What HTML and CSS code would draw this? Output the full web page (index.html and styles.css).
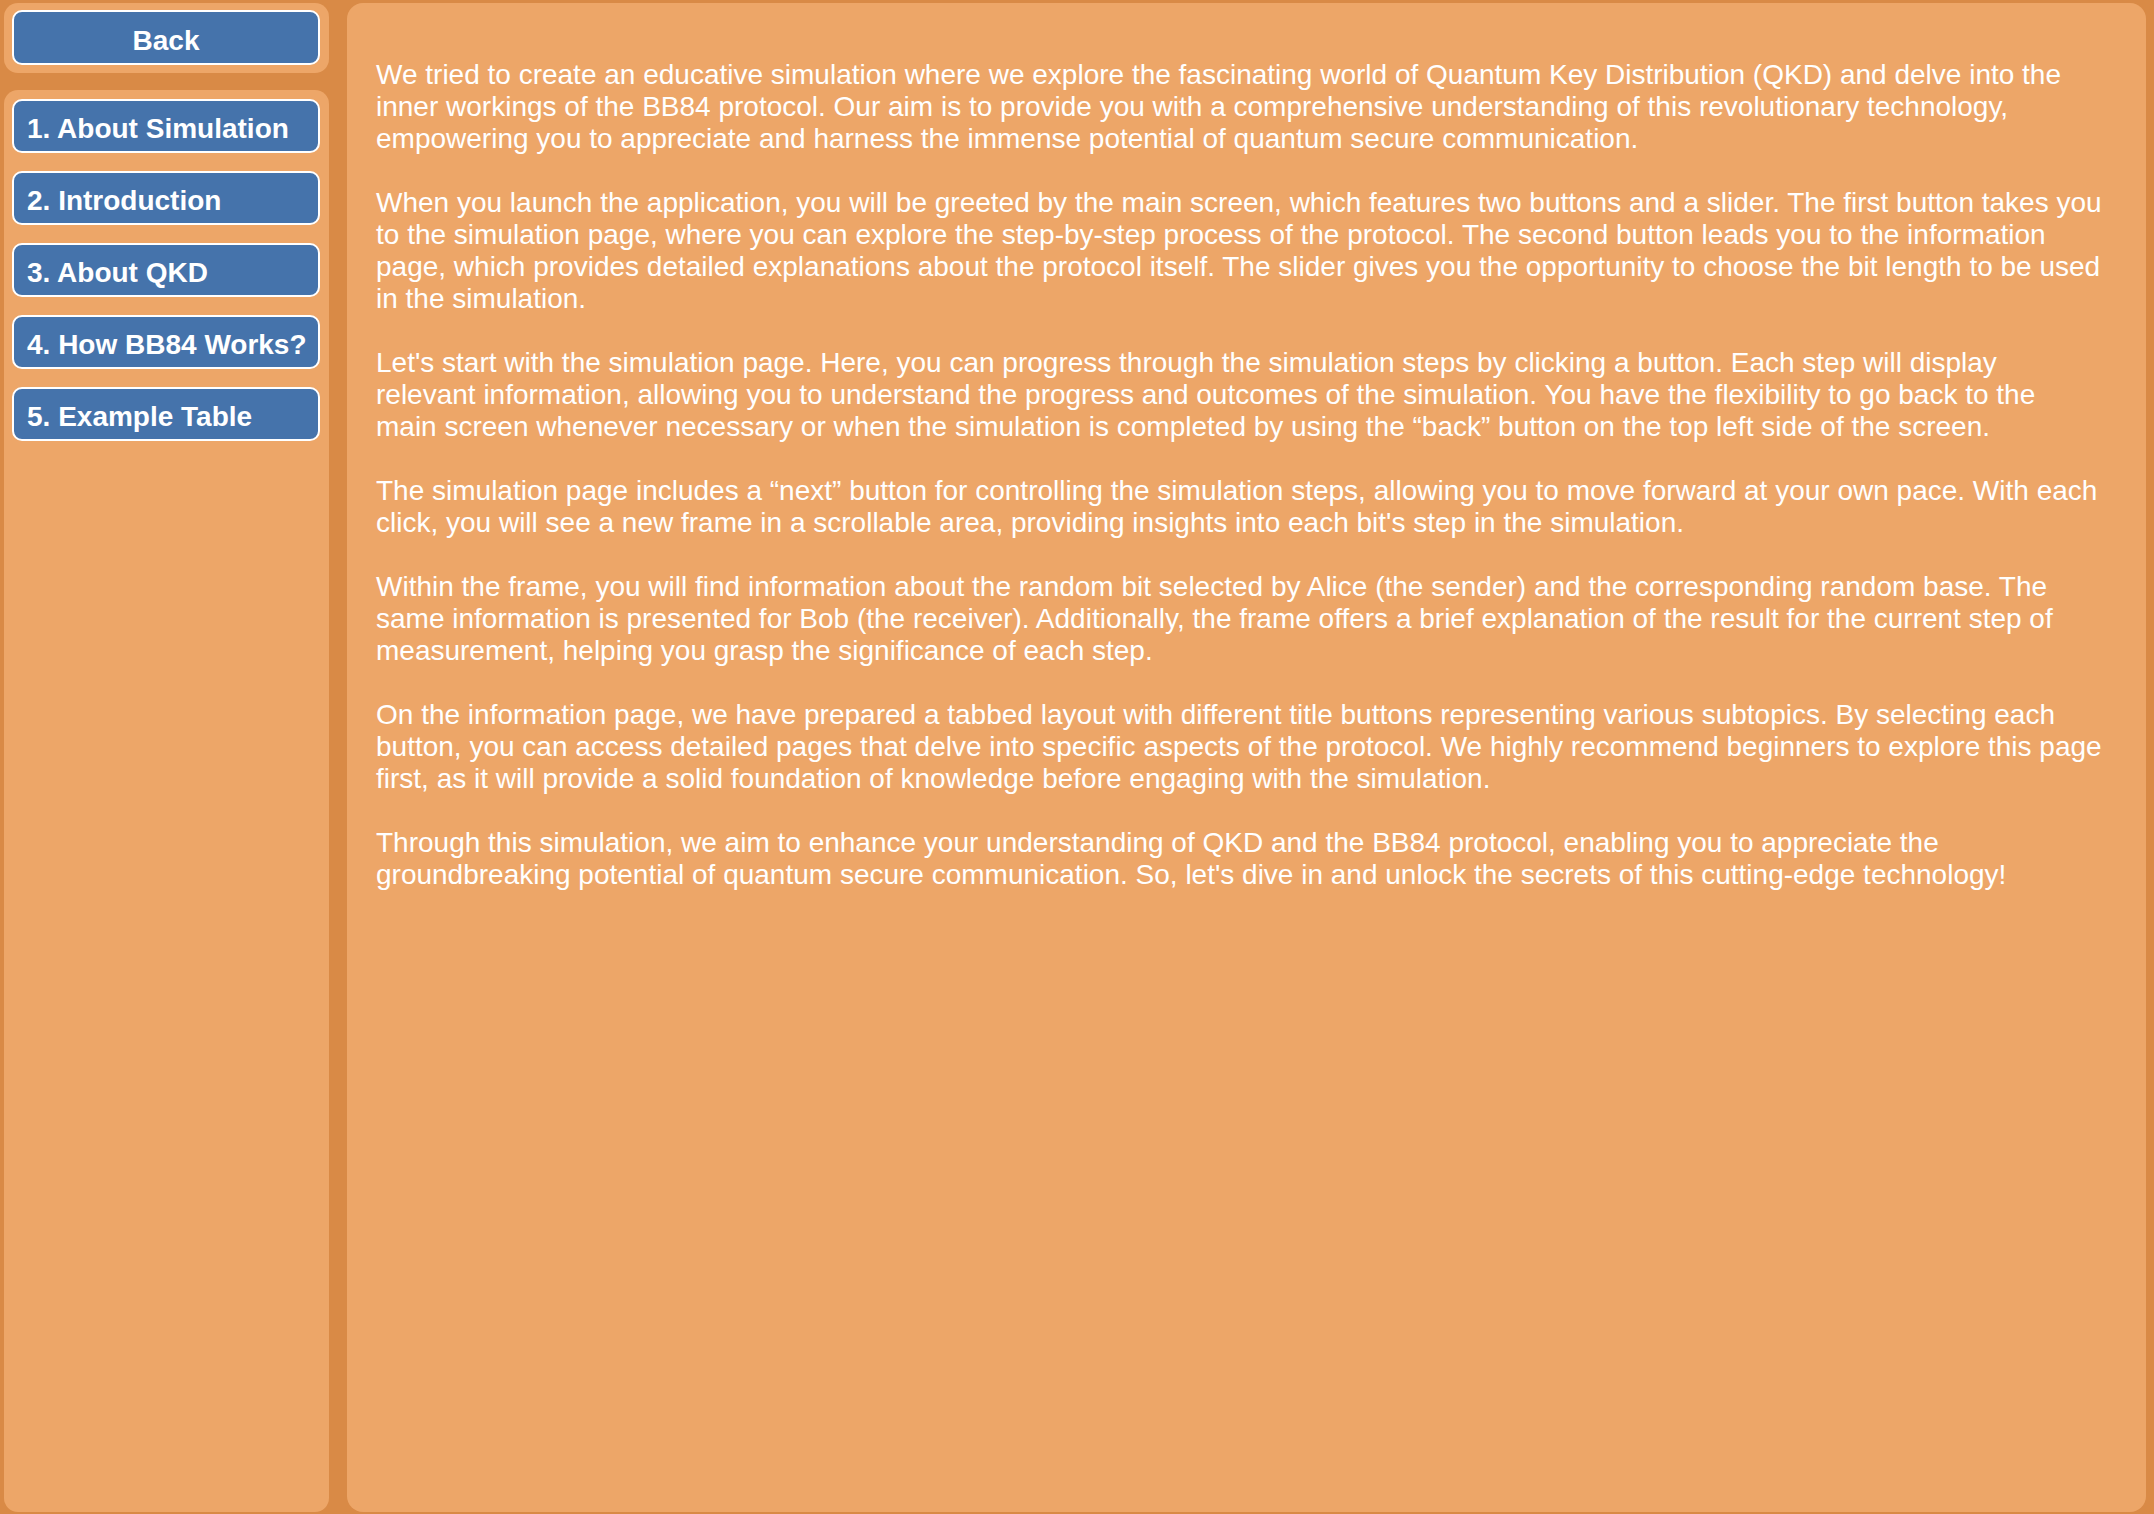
FILE: index.html
```html
<!DOCTYPE html>
<html lang="en">
<head>
<meta charset="utf-8">
<title>About Simulation</title>
<link rel="stylesheet" href="styles.css">
</head>
<body>
<div class="app">
  <aside class="sidebar">
    <div class="panel back-panel">
      <button class="btn btn-center">Back</button>
    </div>
    <nav class="panel nav-panel">
      <button class="btn">1. About Simulation</button>
      <button class="btn">2. Introduction</button>
      <button class="btn">3. About QKD</button>
      <button class="btn">4. How BB84 Works?</button>
      <button class="btn">5. Example Table</button>
    </nav>
  </aside>
  <main class="panel content">
    <p>We tried to create an educative simulation where we explore the fascinating world of Quantum Key Distribution (QKD) and delve into the<br>inner workings of the BB84 protocol. Our aim is to provide you with a comprehensive understanding of this revolutionary technology,<br>empowering you to appreciate and harness the immense potential of quantum secure communication.</p>
    <p>When you launch the application, you will be greeted by the main screen, which features two buttons and a slider. The first button takes you<br>to the simulation page, where you can explore the step-by-step process of the protocol. The second button leads you to the information<br>page, which provides detailed explanations about the protocol itself. The slider gives you the opportunity to choose the bit length to be used<br>in the simulation.</p>
    <p>Let's start with the simulation page. Here, you can progress through the simulation steps by clicking a button. Each step will display<br>relevant information, allowing you to understand the progress and outcomes of the simulation. You have the flexibility to go back to the<br>main screen whenever necessary or when the simulation is completed by using the “back” button on the top left side of the screen.</p>
    <p>The simulation page includes a “next” button for controlling the simulation steps, allowing you to move forward at your own pace. With each<br>click, you will see a new frame in a scrollable area, providing insights into each bit's step in the simulation.</p>
    <p>Within the frame, you will find information about the random bit selected by Alice (the sender) and the corresponding random base. The<br>same information is presented for Bob (the receiver). Additionally, the frame offers a brief explanation of the result for the current step of<br>measurement, helping you grasp the significance of each step.</p>
    <p>On the information page, we have prepared a tabbed layout with different title buttons representing various subtopics. By selecting each<br>button, you can access detailed pages that delve into specific aspects of the protocol. We highly recommend beginners to explore this page<br>first, as it will provide a solid foundation of knowledge before engaging with the simulation.</p>
    <p>Through this simulation, we aim to enhance your understanding of QKD and the BB84 protocol, enabling you to appreciate the<br>groundbreaking potential of quantum secure communication. So, let's dive in and unlock the secrets of this cutting-edge technology!</p>
  </main>
</div>
</body>
</html>
```

FILE: styles.css
```css
html, body {
  margin: 0;
  padding: 0;
}

body {
  background: #d98a46;
  font-family: "Liberation Sans", Arial, Helvetica, sans-serif;
  overflow: hidden;
}

.app {
  box-sizing: border-box;
  height: 1514px;
  display: flex;
  gap: 18px;
  padding: 3px 8px 2px 4px;
}

.sidebar {
  width: 325px;
  flex: 0 0 325px;
  display: flex;
  flex-direction: column;
  gap: 17px;
}

.panel {
  background: #eda668;
  border-radius: 14px;
  box-sizing: border-box;
}

.back-panel {
  height: 70px;
  flex: 0 0 70px;
  padding: 7px 9px 8px 8px;
}

.nav-panel {
  flex: 1;
  padding: 9px 9px 8px 8px;
  display: flex;
  flex-direction: column;
  gap: 18px;
}

.btn {
  display: block;
  width: 100%;
  height: 54px;
  flex: 0 0 54px;
  box-sizing: border-box;
  margin: 0;
  background: #4573ab;
  color: #ffffff;
  border: 2px solid #ffffff;
  border-radius: 10px;
  font-family: "Liberation Sans", Arial, Helvetica, sans-serif;
  font-weight: bold;
  font-size: 28px;
  text-align: left;
  padding: 6px 8px 0 13px;
  line-height: 1;
  white-space: nowrap;
  overflow: visible;
  cursor: pointer;
}

.back-panel .btn {
  height: 55px;
}

.btn-center {
  text-align: center;
  padding-left: 0;
  padding-right: 0;
}

.content {
  flex: 1;
  border-radius: 16px;
  padding: 56px 20px 20px 29px;
  color: #ffffff;
  font-size: 28px;
  line-height: 32px;
}

.content p {
  margin: 0 0 32px 0;
  white-space: nowrap;
}
```
